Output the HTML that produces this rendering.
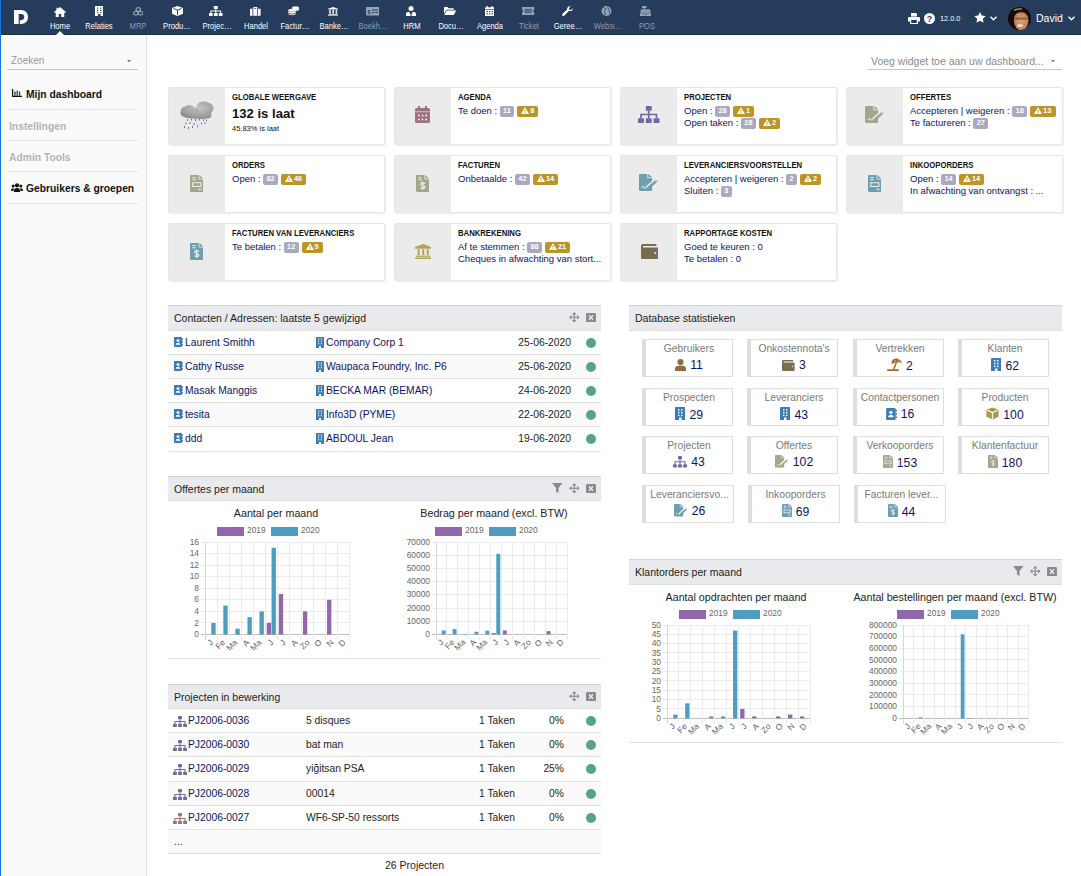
<!DOCTYPE html>
<html><head><meta charset="utf-8"><title>Dolibarr</title>
<style>
*{box-sizing:border-box;}
html,body{margin:0;padding:0;}
body{width:1081px;height:876px;overflow:hidden;position:relative;background:#fff;font-family:"Liberation Sans", sans-serif;color:#222;}
.a{position:absolute;white-space:nowrap;}
.nav{position:absolute;left:0;top:0;width:1081px;height:35px;background:#263c5c;border-bottom:1px solid #1d3048;}
.navt{position:absolute;top:21.2px;font-size:8.8px;color:#fff;text-align:center;width:60px;line-height:10px;transform:scaleX(0.86);transform-origin:50% 0;}
.navt.dis{color:#8f9db0;}
.side{position:absolute;left:2px;top:36px;width:144px;height:840px;background:#fafafa;}
.sideb{position:absolute;left:146px;top:35px;width:1px;height:841px;background:#dcdcdc;}
.box{position:absolute;width:217px;height:58px;background:#fff;border:1px solid #e6e6e6;border-radius:2px;box-shadow:1px 1px 2px rgba(0,0,0,.07);}
.boxi{position:absolute;left:0;top:0;width:56px;height:56px;background:#ebebeb;border-radius:1.5px 0 0 1.5px;}
.bt{position:absolute;left:63px;top:3.7px;font-size:8.4px;font-weight:bold;color:#111;text-transform:uppercase;white-space:nowrap;transform:scaleX(0.92);transform-origin:0 0;}
.bl{position:absolute;left:63px;font-size:9.5px;color:#0a1464;white-space:nowrap;line-height:12px;}
.bg{display:inline-block;vertical-align:1px;height:10.5px;line-height:10.5px;padding:0 3.3px;border-radius:2px;font-size:7.4px;font-weight:bold;color:#fff;background:#aaa9bf;text-align:center;margin-left:0px;}
.bw{display:inline-block;vertical-align:1px;height:10.5px;line-height:10.5px;padding:0 4.2px 0 4px;border-radius:2px;font-size:7.4px;font-weight:bold;color:#fff;background:#bc9526;text-align:center;margin-left:3px;}
.wh{position:absolute;height:26px;background:#e9eaed;border-top:1px solid #d2d2d2;border-bottom:1px solid #dedede;font-size:10.5px;color:#222;}
.wh span.t{position:absolute;left:6px;top:6px;}
.row{position:absolute;height:24px;border-bottom:1px solid #e0e0e0;font-size:10.3px;color:#0a1464;}
.row span{position:absolute;top:6px;white-space:nowrap;}
.dot{position:absolute;width:10px;height:10px;border-radius:50%;background:#55a580;}
.sb{position:absolute;width:91px;height:38px;background:#fff;border:1px solid #dedede;border-left:4px solid #dedede;}
.sbt{position:absolute;left:0;right:0;top:2.9px;text-align:center;font-size:10.3px;color:#7a7a7a;white-space:nowrap;}
.sbv{position:absolute;left:0;right:0;top:18.2px;text-align:center;font-size:12.2px;color:#0a1464;white-space:nowrap;}
</style></head><body>

<div class="a" style="left:0;top:0;width:1px;height:876px;background:#1476dc;z-index:5"></div>
<div class="nav"></div>
<svg class="a" style="left:14px;top:10px" width="14" height="14" viewBox="0 0 15 15"><path d="M0 0 H7.5 C12.5 0 15 3.2 15 7.5 C15 11.8 12.5 15 7.5 15 H6.2 V11 H7.5 C9.8 11 11 9.5 11 7.5 C11 5.5 9.8 4.2 7.5 4.2 H5 V15 H0 Z" fill="#fff"/></svg>
<div class="navt" style="left:30.1px">Home</div>
<svg class="a" style="left:54px;top:6.5px" width="12" height="10" viewBox="0 0 24 20" preserveAspectRatio="none"><path d="M12 0 L24 10 L22.3 12 L20.5 10.5 V20 H14.5 V14 H9.5 V20 H3.5 V10.5 L1.7 12 L0 10 L5 5.8 V1.5 H8 V3.3 Z" fill="#fff"/></svg>
<div class="navt" style="left:69.2px">Relaties</div>
<svg class="a" style="left:94.5px;top:6px" width="8.5" height="10" viewBox="0 0 17 20" preserveAspectRatio="none"><path d="M0 0 H17 V20 H11 V16 H6 V20 H0 Z" fill="#fff"/><g fill="#263c5c"><rect x="4" y="3" width="2.5" height="2.5"/><rect x="10.5" y="3" width="2.5" height="2.5"/><rect x="4" y="7.5" width="2.5" height="2.5"/><rect x="10.5" y="7.5" width="2.5" height="2.5"/><rect x="4" y="12" width="2.5" height="2.5"/><rect x="10.5" y="12" width="2.5" height="2.5"/></g></svg>
<div class="navt dis" style="left:108.3px">MRP</div>
<svg class="a" style="left:132.5px;top:7px" width="10.6" height="8.6" viewBox="0 0 22 18" preserveAspectRatio="none"><g fill="none" stroke="#97a3b4" stroke-width="2.2"><path d="M11 1.2 L15.5 3 V7.5 L11 9.3 L6.5 7.5 V3 Z"/><path d="M6 9 L10.5 10.8 V15.3 L6 17 L1.5 15.3 V10.8 Z"/><path d="M16 9 L20.5 10.8 V15.3 L16 17 L11.5 15.3 V10.8 Z"/></g></svg>
<div class="navt" style="left:147.4px">Produ…</div>
<svg class="a" style="left:171.6px;top:6px" width="11" height="10" viewBox="0 0 22 20" preserveAspectRatio="none"><path d="M11 0 L22 4 V15.5 L11 20 L0 15.5 V4 Z" fill="#fff"/><path d="M3 5 L11 8.2 L19 5 M11 8.2 V17.5" stroke="#263c5c" stroke-width="2" fill="none"/><path d="M11 8.2 L19 5 V14.5 L11 17.5 Z" fill="#263c5c" opacity=".0"/></svg>
<div class="navt" style="left:186.5px">Projec…</div>
<svg class="a" style="left:209.2px;top:6px" width="13.6" height="10" viewBox="0 0 27 20" preserveAspectRatio="none"><g fill="#fff"><rect x="9.5" y="0" width="8" height="6" rx="1"/><rect x="0" y="14" width="7.5" height="6" rx="1"/><rect x="9.75" y="14" width="7.5" height="6" rx="1"/><rect x="19.5" y="14" width="7.5" height="6" rx="1"/></g><path d="M13.5 6 V14 M3.75 14 V10 H23.25 V14" stroke="#fff" stroke-width="2" fill="none"/></svg>
<div class="navt" style="left:225.6px">Handel</div>
<svg class="a" style="left:250px;top:7px" width="10.6" height="8.7" viewBox="0 0 21 17" preserveAspectRatio="none"><path d="M6.5 0 H14.5 V3.5 H21 V17 H0 V3.5 H6.5 Z M8.5 2 V3.5 H12.5 V2 Z" fill="#fff" fill-rule="evenodd"/><rect x="5" y="3.5" width="1.6" height="13.5" fill="#263c5c"/><rect x="14.4" y="3.5" width="1.6" height="13.5" fill="#263c5c"/></svg>
<div class="navt" style="left:264.7px">Factur…</div>
<svg class="a" style="left:288.4px;top:6px" width="11.6" height="9.6" viewBox="0 0 23 19" preserveAspectRatio="none"><g fill="#fff"><ellipse cx="15" cy="3.5" rx="7" ry="3.2"/><path d="M8 5 Q15 9 22 5 V8 Q15 12 8 8 Z"/><ellipse cx="8" cy="8.5" rx="7.5" ry="3"/><path d="M0.5 10.5 Q8 14.5 15.5 10.5 V13.5 Q8 17.5 0.5 13.5 Z"/><path d="M0.5 15 Q8 19 15.5 15 V16.5 Q8 20.5 0.5 16.5 Z"/></g></svg>
<div class="navt" style="left:303.8px">Banke…</div>
<svg class="a" style="left:328px;top:7px" width="10.4" height="8.6" viewBox="0 0 21 17" preserveAspectRatio="none"><path d="M10.5 0 L21 3.5 V5 H0 V3.5 Z" fill="#fff"/><g fill="#fff"><rect x="2.5" y="6" width="3" height="7"/><rect x="9" y="6" width="3" height="7"/><rect x="15.5" y="6" width="3" height="7"/><rect x="1" y="13.5" width="19" height="1.6"/><rect x="0" y="15.4" width="21" height="1.6"/></g></svg>
<div class="navt dis" style="left:342.9px">Boekh…</div>
<svg class="a" style="left:365.5px;top:7px" width="13.5" height="8.6" viewBox="0 0 27 17" preserveAspectRatio="none"><rect x="0" y="0" width="27" height="17" rx="1.5" fill="#97a3b4"/><text x="6" y="13" font-size="11" font-weight="bold" text-anchor="middle" fill="#263c5c" font-family="Liberation Sans">$</text><rect x="12" y="5" width="12" height="2" fill="#263c5c"/><rect x="12" y="10" width="5" height="2" fill="#263c5c"/><rect x="19" y="10" width="5" height="2" fill="#263c5c"/></svg>
<div class="navt" style="left:382.0px">HRM</div>
<svg class="a" style="left:406.2px;top:6px" width="10" height="10" viewBox="0 0 20 20" preserveAspectRatio="none"><circle cx="10" cy="5" r="5" fill="#fff"/><path d="M0 20 V16.5 Q0 11.5 5.5 11.5 L10 16.5 L14.5 11.5 Q20 11.5 20 16.5 V20 Z" fill="#fff"/><path d="M9 12.5 H11 L11.5 19 L10 20 L8.5 19 Z" fill="#263c5c"/></svg>
<div class="navt" style="left:421.1px">Docu…</div>
<svg class="a" style="left:444px;top:7px" width="12.3" height="8" viewBox="0 0 25 16" preserveAspectRatio="none"><path d="M0 1.5 Q0 0 1.5 0 H7 L9.5 2.5 H18.5 Q20 2.5 20 4 V5.5 H5 L0 13.5 Z" fill="#fff"/><path d="M5.5 7 H25 L20 16 H0.5 Z" fill="#fff"/></svg>
<div class="navt" style="left:460.2px">Agenda</div>
<svg class="a" style="left:484.8px;top:6px" width="9.5" height="10" viewBox="0 0 19 20" preserveAspectRatio="none"><path d="M0 4 Q0 2.5 1.5 2.5 H17.5 Q19 2.5 19 4 V18.5 Q19 20 17.5 20 H1.5 Q0 20 0 18.5 Z" fill="#fff"/><rect x="3.5" y="0" width="2.5" height="4" fill="#fff"/><rect x="13" y="0" width="2.5" height="4" fill="#fff"/><rect x="0" y="6" width="19" height="1.3" fill="#263c5c"/><g fill="#263c5c"><rect x="3" y="10" width="2.6" height="2.4"/><rect x="8.2" y="10" width="2.6" height="2.4"/><rect x="13.4" y="10" width="2.6" height="2.4"/><rect x="3" y="14.5" width="2.6" height="2.4"/><rect x="8.2" y="14.5" width="2.6" height="2.4"/><rect x="13.4" y="14.5" width="2.6" height="2.4"/></g></svg>
<div class="navt dis" style="left:499.3px">Ticket</div>
<svg class="a" style="left:522.4px;top:7px" width="12.3" height="8" viewBox="0 0 25 16" preserveAspectRatio="none"><path d="M0 0 H25 V5 Q23 5 23 8 Q23 11 25 11 V16 H0 V11 Q2 11 2 8 Q2 5 0 5 Z" fill="#97a3b4"/><rect x="5" y="3.5" width="15" height="9" fill="#263c5c" opacity=".55"/></svg>
<div class="navt" style="left:538.4px">Geree…</div>
<svg class="a" style="left:561.8px;top:6px" width="11" height="10" viewBox="0 0 22 20" preserveAspectRatio="none"><path d="M21.5 4.5 L18 8 L14.5 7.5 L14 4 L17.5 0.5 C13.5 -0.5 9.5 2.5 10.2 7 L1.2 15.5 C0 16.8 0 18.5 1.2 19.3 C2.3 20.3 3.8 20 4.8 18.8 L13.5 10 C18 11 22.5 8.5 21.5 4.5 Z" fill="#fff"/></svg>
<div class="navt dis" style="left:577.5px">Websi…</div>
<svg class="a" style="left:601.1px;top:6px" width="11" height="10" viewBox="0 0 22 20" preserveAspectRatio="none"><circle cx="11" cy="10" r="10" fill="#97a3b4"/><path d="M5 3.5 Q8 3 9 5.5 Q10 8 7.5 9 Q5.5 10.5 7.5 13 Q9 15 8 18.5 M14 1.2 Q12.5 4 14.5 5.5 Q17 6.5 16.5 9 Q15.5 11.5 17.5 14 Q18.5 15 18 16.5" stroke="#263c5c" stroke-width="1.8" fill="none"/></svg>
<div class="navt dis" style="left:616.6px">POS</div>
<svg class="a" style="left:640.2px;top:6px" width="11" height="10" viewBox="0 0 22 20" preserveAspectRatio="none"><rect x="4" y="0" width="9" height="4" fill="#97a3b4"/><rect x="7.5" y="4" width="2" height="2.5" fill="#97a3b4"/><path d="M2 6.5 H20 L21.5 13.5 H0.5 Z" fill="#97a3b4"/><rect x="0" y="14.5" width="22" height="5.5" fill="#97a3b4"/><g fill="#263c5c" opacity=".6"><rect x="5" y="8.5" width="2" height="1.5"/><rect x="10" y="8.5" width="2" height="1.5"/><rect x="15" y="8.5" width="2" height="1.5"/><rect x="7" y="16.5" width="8" height="1.5"/></g></svg>
<svg class="a" style="left:55px;top:30px" width="10" height="6" viewBox="0 0 10 6"><path d="M0 6 L5 1 L10 6 Z" fill="#fff"/></svg>
<svg class="a" style="left:908px;top:13px" width="12" height="11" viewBox="0 0 12 11"><path d="M3 0 H8 L9 1 V3.5 H3 Z M1 4 H11 Q12 4 12 5 V8.5 H10 V11 H2 V8.5 H0 V5 Q0 4 1 4 Z" fill="#fff"/><rect x="3.2" y="7" width="5.6" height="3" fill="#263c5c"/></svg>
<svg class="a" style="left:924px;top:13px" width="11" height="11" viewBox="0 0 11 11"><circle cx="5.5" cy="5.5" r="5.5" fill="#fff"/><text x="5.5" y="9" font-size="9" font-weight="bold" text-anchor="middle" fill="#263c5c" font-family="Liberation Sans">?</text></svg>
<div class="a" style="left:940px;top:13.5px;font-size:7.3px;color:#fff;line-height:10px">12.0.0</div>
<svg class="a" style="left:974px;top:12px" width="12" height="11" viewBox="0 0 24 23"><path d="M12 0 L15.5 7.5 L24 8.5 L17.8 14.2 L19.4 22.5 L12 18.4 L4.6 22.5 L6.2 14.2 L0 8.5 L8.5 7.5 Z" fill="#fff"/></svg>
<svg class="a" style="left:990px;top:16px" width="7" height="5" viewBox="0 0 7 5"><path d="M0.5 0.8 L3.5 3.8 L6.5 0.8" stroke="#fff" stroke-width="1.4" fill="none"/></svg>
<svg class="a" style="left:1008px;top:7px" width="23" height="23" viewBox="0 0 23 23"><defs><clipPath id="av"><circle cx="11.5" cy="11.5" r="11.5"/></clipPath><radialGradient id="fg" cx=".5" cy=".5" r=".6"><stop offset="0" stop-color="#e0a27c"/><stop offset="1" stop-color="#b87452"/></radialGradient></defs><g clip-path="url(#av)"><rect width="23" height="23" fill="#140c08"/><ellipse cx="13.2" cy="13.5" rx="7.3" ry="9.8" fill="url(#fg)"/><path d="M3 7 Q8 1 16 2.5 Q21 4 21 10 L19.5 9 Q18 5 13 5.2 Q8 5.5 6.5 9 Z" fill="#1a100a"/><path d="M6 3.5 Q10 1.2 14 2" stroke="#b8a850" stroke-width="1.2" fill="none"/><rect x="6.5" y="10.5" width="14" height="2.2" fill="#6a4a3a" opacity=".65"/><ellipse cx="12" cy="18.5" rx="3" ry="1.6" fill="#e8dcc0"/></g></svg>
<div class="a" style="left:1036px;top:12px;font-size:10.5px;color:#fff;line-height:12px">David</div>
<svg class="a" style="left:1068px;top:16px" width="7" height="5" viewBox="0 0 7 5"><path d="M0.5 0.8 L3.5 3.8 L6.5 0.8" stroke="#fff" stroke-width="1.4" fill="none"/></svg>
<div class="side"></div><div class="sideb"></div>
<div class="a" style="left:11px;top:55px;font-size:10px;color:#999;line-height:12px">Zoeken</div>
<svg class="a" style="left:127px;top:59.5px" width="4" height="2.5" viewBox="0 0 5 3"><path d="M0 0 H5 L2.5 3 Z" fill="#777"/></svg>
<div class="a" style="left:7px;top:69px;width:131px;height:1px;background:#c8c8c8"></div>
<svg class="a" style="left:12px;top:89px" width="10" height="8" viewBox="0 0 10 8"><path d="M0.6 0 V7.4 H10" stroke="#111" stroke-width="1.2" fill="none"/><rect x="2.3" y="2.5" width="1.3" height="4.3" fill="#263c5c"/><rect x="4.6" y="1.5" width="1.3" height="5.3" fill="#263c5c"/><rect x="6.9" y="2.5" width="1.3" height="4.3" fill="#263c5c"/></svg>
<div class="a" style="left:26px;top:88.8px;font-size:10.3px;font-weight:bold;color:#111;line-height:12px">Mijn dashboard</div>
<div class="a" style="left:7px;top:109px;width:131px;height:1px;background:#e3e3e3"></div>
<div class="a" style="left:9px;top:120.8px;font-size:10.3px;font-weight:bold;color:#b3b3b3;line-height:12px">Instellingen</div>
<div class="a" style="left:7px;top:140px;width:131px;height:1px;background:#e3e3e3"></div>
<div class="a" style="left:9px;top:151.7px;font-size:10.3px;font-weight:bold;color:#b3b3b3;line-height:12px">Admin Tools</div>
<div class="a" style="left:7px;top:171px;width:131px;height:1px;background:#e3e3e3"></div>
<svg class="a" style="left:11px;top:183px" width="12" height="9" viewBox="0 0 12 9"><circle cx="6" cy="2.3" r="2.1" fill="#111"/><circle cx="2.2" cy="3" r="1.5" fill="#111"/><circle cx="9.8" cy="3" r="1.5" fill="#111"/><path d="M2.8 9 Q2.8 5 6 5 Q9.2 5 9.2 9 Z" fill="#111"/><path d="M0 8 Q0 5.2 2.2 5.2 Q3 5.2 3.4 5.6 Q2.3 6.5 2.3 8 Z M12 8 Q12 5.2 9.8 5.2 Q9 5.2 8.6 5.6 Q9.7 6.5 9.7 8 Z" fill="#111"/></svg>
<div class="a" style="left:26px;top:182.5px;font-size:10.3px;font-weight:bold;color:#111;line-height:12px">Gebruikers &amp; groepen</div>
<div class="a" style="left:7px;top:203px;width:131px;height:1px;background:#e3e3e3"></div>
<div class="a" style="left:871px;top:55px;font-size:10.5px;color:#8a8a8a;line-height:12px">Voeg widget toe aan uw dashboard...</div>
<svg class="a" style="left:1051px;top:59.5px" width="4" height="2.5" viewBox="0 0 5 3"><path d="M0 0 H5 L2.5 3 Z" fill="#777"/></svg>
<div class="a" style="left:867px;top:69px;width:195px;height:1px;background:#c8c8c8"></div>
<div class="box" style="left:168px;top:87px"><div class="boxi"></div>
<div class="bt">GLOBALE WEERGAVE</div>
<div class="a" style="left:63px;top:17.8px;font-size:13.1px;font-weight:bold;color:#111;line-height:15px">132 is laat</div>
<div class="a" style="left:63px;top:35.8px;font-size:7.5px;color:#111;line-height:9px">45,83% is laat</div>
<svg class="a" style="left:11px;top:13px" width="34" height="32" viewBox="0 0 34 32"><defs><radialGradient id="cg" cx=".55" cy=".35" r=".7"><stop offset="0" stop-color="#c4c4c4"/><stop offset=".6" stop-color="#a5a5a5"/><stop offset="1" stop-color="#888"/></radialGradient></defs>
<path d="M2 15 Q-0.5 13 0.8 9.5 Q1.5 6 5 5.5 Q8 3 11.5 4.5 Q14 5.5 16 7 Q17 2 21 1 Q25 0 28 1.5 Q32 2.5 33 5.5 Q34.5 8 32.5 10 Q31.5 11.5 31 12.5 Q32.5 15 30 17 Q22 18.5 12 17.5 Q5 17 2 15 Z" fill="url(#cg)"/>
<path d="M16 7 Q17.5 9 17 12" stroke="#8a8a8a" stroke-width=".8" fill="none" opacity=".6"/>
<g fill="#5a7fae"><rect x="7" y="18" width="1" height="2"/><rect x="11" y="17.5" width="1" height="2"/><rect x="15" y="18" width="1" height="2"/><rect x="19" y="17.5" width="1" height="2"/><rect x="23" y="18" width="1" height="2"/><rect x="26" y="18.5" width="1" height="2"/>
<rect x="5.5" y="21.5" width="1" height="2"/><rect x="9.5" y="21" width="1" height="2"/><rect x="13.5" y="22" width="1" height="2"/><rect x="21" y="21.5" width="1" height="2"/><rect x="24.5" y="21" width="1" height="2"/>
<rect x="4" y="25" width="1" height="2"/><rect x="8" y="26" width="1" height="2"/><rect x="12" y="25" width="1" height="2"/><rect x="17" y="24.5" width="1" height="2"/></g>
<path d="M18 17.5 L16 23 L19 23 L17 31" stroke="#dcdcf2" stroke-width="1.2" fill="none"/></svg>
</div>
<div class="box" style="left:394px;top:87px"><div class="boxi"></div>
<div class="bt">AGENDA</div>
<div class="bl" style="top:17px">Te doen : <span class="bg">11</span><span class="bw"><svg width="8" height="7" viewBox="0 0 8 7" style="vertical-align:-0.5px;margin-right:1px"><path d="M4 0 L8 7 H0 Z" fill="#fff"/><rect x="3.5" y="2.3" width="1" height="2.4" fill="#bc9526"/><rect x="3.5" y="5.2" width="1" height="1" fill="#bc9526"/></svg>8</span></div>
<svg class="a" style="left:20px;top:18px" width="15" height="17" viewBox="0 0 15 17"><path d="M0 3.5 Q0 2 1.5 2 H13.5 Q15 2 15 3.5 V15.5 Q15 17 13.5 17 H1.5 Q0 17 0 15.5 Z" fill="#9d7281"/><rect x="3" y="0" width="2" height="3" fill="#9d7281"/><rect x="10" y="0" width="2" height="3" fill="#9d7281"/><rect x="0" y="5" width="15" height="1.3" fill="#c7a9b3"/><g fill="#fff"><rect x="3" y="8.7" width="1.6" height="1.6"/><rect x="6.7" y="8.7" width="1.6" height="1.6"/><rect x="10.4" y="8.7" width="1.6" height="1.6"/><rect x="3" y="12.7" width="1.6" height="1.6"/><rect x="6.7" y="12.7" width="1.6" height="1.6"/><rect x="10.4" y="12.7" width="1.6" height="1.6"/></g></svg>
</div>
<div class="box" style="left:620px;top:87px"><div class="boxi"></div>
<div class="bt">PROJECTEN</div>
<div class="bl" style="top:17px">Open : <span class="bg">28</span><span class="bw"><svg width="8" height="7" viewBox="0 0 8 7" style="vertical-align:-0.5px;margin-right:1px"><path d="M4 0 L8 7 H0 Z" fill="#fff"/><rect x="3.5" y="2.3" width="1" height="2.4" fill="#bc9526"/><rect x="3.5" y="5.2" width="1" height="1" fill="#bc9526"/></svg>1</span></div>
<div class="bl" style="top:29px">Open taken : <span class="bg">28</span><span class="bw"><svg width="8" height="7" viewBox="0 0 8 7" style="vertical-align:-0.5px;margin-right:1px"><path d="M4 0 L8 7 H0 Z" fill="#fff"/><rect x="3.5" y="2.3" width="1" height="2.4" fill="#bc9526"/><rect x="3.5" y="5.2" width="1" height="1" fill="#bc9526"/></svg>2</span></div>
<svg class="a" style="left:17px;top:18px" width="21.5" height="17" viewBox="0 0 18 14" preserveAspectRatio="none"><rect x="6.5" y="0" width="5" height="4" rx=".6" fill="#6c6aa0"/><rect x="0" y="10" width="5" height="4" rx=".6" fill="#6c6aa0"/><rect x="6.5" y="10" width="5" height="4" rx=".6" fill="#6c6aa0"/><rect x="13" y="10" width="5" height="4" rx=".6" fill="#6c6aa0"/><path d="M9 4 V10 M2.5 10 V7 H15.5 V10" stroke="#6c6aa0" stroke-width="1.4" fill="none"/></svg>
</div>
<div class="box" style="left:846px;top:87px"><div class="boxi"></div>
<div class="bt">OFFERTES</div>
<div class="bl" style="top:17px">Accepteren | weigeren : <span class="bg">18</span><span class="bw"><svg width="8" height="7" viewBox="0 0 8 7" style="vertical-align:-0.5px;margin-right:1px"><path d="M4 0 L8 7 H0 Z" fill="#fff"/><rect x="3.5" y="2.3" width="1" height="2.4" fill="#bc9526"/><rect x="3.5" y="5.2" width="1" height="1" fill="#bc9526"/></svg>13</span></div>
<div class="bl" style="top:29px">Te factureren : <span class="bg">27</span></div>
<svg class="a" style="left:18px;top:18px" width="20" height="17" viewBox="0 0 16 16" preserveAspectRatio="none"><path d="M1 0 H7.5 L10.5 3 V6.5 L6 11 L5.5 13.5 L8 13 L10.5 10.5 V15 Q10.5 16 9.5 16 H1 Q0 16 0 15 V1 Q0 0 1 0 Z" fill="#a3a68c"/><path d="M7 0 V3.5 H10.5" stroke="#ebebeb" stroke-width=".8" fill="none"/><path d="M2 13 Q3.5 11 4 12.5 Q4.5 13.5 6 12.8" stroke="#ebebeb" stroke-width=".9" fill="none"/><path d="M6.5 12.5 L13.5 5.5 L15 7 L8 14 L6 14.5 Z" fill="#a3a68c"/><path d="M12.8 6.2 L14.3 7.7" stroke="#ebebeb" stroke-width=".8"/></svg>
</div>
<div class="box" style="left:168px;top:155px"><div class="boxi"></div>
<div class="bt">ORDERS</div>
<div class="bl" style="top:17px">Open : <span class="bg">82</span><span class="bw"><svg width="8" height="7" viewBox="0 0 8 7" style="vertical-align:-0.5px;margin-right:1px"><path d="M4 0 L8 7 H0 Z" fill="#fff"/><rect x="3.5" y="2.3" width="1" height="2.4" fill="#bc9526"/><rect x="3.5" y="5.2" width="1" height="1" fill="#bc9526"/></svg>46</span></div>
<svg class="a" style="left:21px;top:19px" width="13.4" height="17" viewBox="0 0 11.5 16" preserveAspectRatio="none"><path d="M1 0 H8 L11.5 3.5 V15 Q11.5 16 10.5 16 H1 Q0 16 0 15 V1 Q0 0 1 0 Z" fill="#a3a68c"/><path d="M7.7 0 V3.8 H11.5" stroke="#ebebeb" stroke-width=".8" fill="none"/><rect x="2" y="2" width="3" height="1" fill="#ebebeb"/><rect x="2" y="4" width="3" height="1" fill="#ebebeb"/><rect x="2.3" y="7.3" width="7" height="3.5" fill="none" stroke="#ebebeb" stroke-width="1"/><rect x="7" y="13" width="3" height="1" fill="#ebebeb"/></svg>
</div>
<div class="box" style="left:394px;top:155px"><div class="boxi"></div>
<div class="bt">FACTUREN</div>
<div class="bl" style="top:17px">Onbetaalde : <span class="bg">42</span><span class="bw"><svg width="8" height="7" viewBox="0 0 8 7" style="vertical-align:-0.5px;margin-right:1px"><path d="M4 0 L8 7 H0 Z" fill="#fff"/><rect x="3.5" y="2.3" width="1" height="2.4" fill="#bc9526"/><rect x="3.5" y="5.2" width="1" height="1" fill="#bc9526"/></svg>14</span></div>
<svg class="a" style="left:21px;top:19px" width="13.4" height="17" viewBox="0 0 11.5 16" preserveAspectRatio="none"><path d="M1 0 H8 L11.5 3.5 V15 Q11.5 16 10.5 16 H1 Q0 16 0 15 V1 Q0 0 1 0 Z" fill="#a3a68c"/><path d="M7.7 0 V3.8 H11.5" stroke="#ebebeb" stroke-width=".8" fill="none"/><rect x="2" y="2" width="3" height="1" fill="#ebebeb"/><rect x="2" y="4" width="3" height="1" fill="#ebebeb"/><path d="M7.6 8.2 Q7.2 7.2 5.8 7.2 Q4 7.2 4 8.5 Q4 9.6 5.8 9.9 Q7.6 10.2 7.6 11.5 Q7.6 12.8 5.8 12.8 Q4.3 12.8 3.9 11.8 M5.8 6.2 V13.8" stroke="#ebebeb" stroke-width="1.1" fill="none"/></svg>
</div>
<div class="box" style="left:620px;top:155px"><div class="boxi"></div>
<div class="bt">LEVERANCIERSVOORSTELLEN</div>
<div class="bl" style="top:17px">Accepteren | weigeren : <span class="bg">2</span><span class="bw"><svg width="8" height="7" viewBox="0 0 8 7" style="vertical-align:-0.5px;margin-right:1px"><path d="M4 0 L8 7 H0 Z" fill="#fff"/><rect x="3.5" y="2.3" width="1" height="2.4" fill="#bc9526"/><rect x="3.5" y="5.2" width="1" height="1" fill="#bc9526"/></svg>2</span></div>
<div class="bl" style="top:29px">Sluiten : <span class="bg">3</span></div>
<svg class="a" style="left:18px;top:18px" width="20" height="17" viewBox="0 0 16 16" preserveAspectRatio="none"><path d="M1 0 H7.5 L10.5 3 V6.5 L6 11 L5.5 13.5 L8 13 L10.5 10.5 V15 Q10.5 16 9.5 16 H1 Q0 16 0 15 V1 Q0 0 1 0 Z" fill="#6d9fb0"/><path d="M7 0 V3.5 H10.5" stroke="#ebebeb" stroke-width=".8" fill="none"/><path d="M2 13 Q3.5 11 4 12.5 Q4.5 13.5 6 12.8" stroke="#ebebeb" stroke-width=".9" fill="none"/><path d="M6.5 12.5 L13.5 5.5 L15 7 L8 14 L6 14.5 Z" fill="#6d9fb0"/><path d="M12.8 6.2 L14.3 7.7" stroke="#ebebeb" stroke-width=".8"/></svg>
</div>
<div class="box" style="left:846px;top:155px"><div class="boxi"></div>
<div class="bt">INKOOPORDERS</div>
<div class="bl" style="top:17px">Open : <span class="bg">14</span><span class="bw"><svg width="8" height="7" viewBox="0 0 8 7" style="vertical-align:-0.5px;margin-right:1px"><path d="M4 0 L8 7 H0 Z" fill="#fff"/><rect x="3.5" y="2.3" width="1" height="2.4" fill="#bc9526"/><rect x="3.5" y="5.2" width="1" height="1" fill="#bc9526"/></svg>14</span></div>
<div class="bl" style="top:29px">In afwachting van ontvangst : ...</div>
<svg class="a" style="left:21px;top:19px" width="13.4" height="17" viewBox="0 0 11.5 16" preserveAspectRatio="none"><path d="M1 0 H8 L11.5 3.5 V15 Q11.5 16 10.5 16 H1 Q0 16 0 15 V1 Q0 0 1 0 Z" fill="#6d9fb0"/><path d="M7.7 0 V3.8 H11.5" stroke="#ebebeb" stroke-width=".8" fill="none"/><rect x="2" y="2" width="3" height="1" fill="#ebebeb"/><rect x="2" y="4" width="3" height="1" fill="#ebebeb"/><rect x="2.3" y="7.3" width="7" height="3.5" fill="none" stroke="#ebebeb" stroke-width="1"/><rect x="7" y="13" width="3" height="1" fill="#ebebeb"/></svg>
</div>
<div class="box" style="left:168px;top:223px"><div class="boxi"></div>
<div class="bt">FACTUREN VAN LEVERANCIERS</div>
<div class="bl" style="top:17px">Te betalen : <span class="bg">12</span><span class="bw"><svg width="8" height="7" viewBox="0 0 8 7" style="vertical-align:-0.5px;margin-right:1px"><path d="M4 0 L8 7 H0 Z" fill="#fff"/><rect x="3.5" y="2.3" width="1" height="2.4" fill="#bc9526"/><rect x="3.5" y="5.2" width="1" height="1" fill="#bc9526"/></svg>9</span></div>
<svg class="a" style="left:21px;top:19px" width="13.4" height="17" viewBox="0 0 11.5 16" preserveAspectRatio="none"><path d="M1 0 H8 L11.5 3.5 V15 Q11.5 16 10.5 16 H1 Q0 16 0 15 V1 Q0 0 1 0 Z" fill="#6d9fb0"/><path d="M7.7 0 V3.8 H11.5" stroke="#ebebeb" stroke-width=".8" fill="none"/><rect x="2" y="2" width="3" height="1" fill="#ebebeb"/><rect x="2" y="4" width="3" height="1" fill="#ebebeb"/><path d="M7.6 8.2 Q7.2 7.2 5.8 7.2 Q4 7.2 4 8.5 Q4 9.6 5.8 9.9 Q7.6 10.2 7.6 11.5 Q7.6 12.8 5.8 12.8 Q4.3 12.8 3.9 11.8 M5.8 6.2 V13.8" stroke="#ebebeb" stroke-width="1.1" fill="none"/></svg>
</div>
<div class="box" style="left:394px;top:223px"><div class="boxi"></div>
<div class="bt">BANKREKENING</div>
<div class="bl" style="top:17px">Af te stemmen : <span class="bg">88</span><span class="bw"><svg width="8" height="7" viewBox="0 0 8 7" style="vertical-align:-0.5px;margin-right:1px"><path d="M4 0 L8 7 H0 Z" fill="#fff"/><rect x="3.5" y="2.3" width="1" height="2.4" fill="#bc9526"/><rect x="3.5" y="5.2" width="1" height="1" fill="#bc9526"/></svg>21</span></div>
<div class="bl" style="top:29px">Cheques in afwachting van stort...</div>
<svg class="a" style="left:19.7px;top:20px" width="16.4" height="15" viewBox="0 0 16 15.5" preserveAspectRatio="none"><path d="M8 0 L16 3.2 Q16.5 4.5 15.5 5 H0.5 Q-0.5 4.5 0 3.2 Z" fill="#aea55c"/><rect x="2.5" y="5.5" width="2" height="6" fill="#aea55c"/><rect x="7" y="5.5" width="2" height="6" fill="#aea55c"/><rect x="11.5" y="5.5" width="2" height="6" fill="#aea55c"/><rect x="1" y="12" width="14" height="1.3" fill="#aea55c"/><rect x="0" y="14" width="16" height="1.5" rx=".5" fill="#aea55c"/></svg>
</div>
<div class="box" style="left:620px;top:223px"><div class="boxi"></div>
<div class="bt">RAPPORTAGE KOSTEN</div>
<div class="bl" style="top:17px">Goed te keuren : 0</div>
<div class="bl" style="top:29px">Te betalen : 0</div>
<svg class="a" style="left:19.6px;top:20px" width="17.4" height="15" viewBox="0 0 17 15" preserveAspectRatio="none"><path d="M1.5 0 H15 V2 H2 V3.5 H16 Q17 3.5 17 4.5 V14 Q17 15 16 15 H1.5 Q0 15 0 13.5 V1.5 Q0 0 1.5 0 Z" fill="#7b6b50"/><circle cx="14" cy="9" r="1" fill="#ebebeb"/></svg>
</div>
<div class="wh" style="left:168px;top:305px;width:433px;height:26px"><span class="t">Contacten / Adressen: laatste 5 gewijzigd</span>
<svg class="a" style="left:401px;top:6px" width="10.5" height="10.5" viewBox="0 0 12 12"><path d="M6 0 L8.6 2.8 H3.4 Z M6 12 L8.6 9.2 H3.4 Z M0 6 L2.8 3.4 V8.6 Z M12 6 L9.2 3.4 V8.6 Z" fill="#8a8a8a"/><path d="M6 2.5 V9.5 M2.5 6 H9.5" stroke="#8a8a8a" stroke-width="1.3"/></svg>
<svg class="a" style="left:418px;top:7px" width="10" height="9" viewBox="0 0 10 9"><rect width="10" height="9" rx="1" fill="#8a8a8a"/><path d="M3 2.2 L7 6.8 M7 2.2 L3 6.8" stroke="#e9eaed" stroke-width="1.4"/></svg>
</div>
<div class="row" style="left:168px;top:331px;width:433px;height:24px;background:#fff">
<svg class="a" style="left:6px;top:6px" width="9" height="10" viewBox="0 0 9 10"><rect x="0" y="0" width="8" height="10" rx="1" fill="#3c7bb4"/><rect x="8" y="1.5" width="1" height="1.5" fill="#3c7bb4"/><rect x="8" y="4.2" width="1" height="1.5" fill="#3c7bb4"/><rect x="8" y="7" width="1" height="1.5" fill="#3c7bb4"/><circle cx="4" cy="3.6" r="1.4" fill="#fff"/><path d="M1.7 7.8 Q1.7 5.7 4 5.7 Q6.3 5.7 6.3 7.8 Z" fill="#fff"/></svg>
<span style="left:17px">Laurent Smithh</span>
<svg class="a" style="left:148px;top:6px" width="8" height="11" viewBox="0 0 8 11"><path d="M0 0 H8 V11 H5 V9 H3 V11 H0 Z" fill="#3c7bb4"/><g fill="#fff"><rect x="2" y="1.5" width="1.2" height="1.2"/><rect x="4.8" y="1.5" width="1.2" height="1.2"/><rect x="2" y="3.8" width="1.2" height="1.2"/><rect x="4.8" y="3.8" width="1.2" height="1.2"/><rect x="2" y="6.1" width="1.2" height="1.2"/><rect x="4.8" y="6.1" width="1.2" height="1.2"/></g></svg>
<span style="left:158px">Company Corp 1</span>
<span style="right:30px;color:#222">25-06-2020</span>
<div class="dot" style="left:418px;top:7px"></div>
</div>
<div class="row" style="left:168px;top:355px;width:433px;height:24px;background:#fafafa">
<svg class="a" style="left:6px;top:6px" width="9" height="10" viewBox="0 0 9 10"><rect x="0" y="0" width="8" height="10" rx="1" fill="#3c7bb4"/><rect x="8" y="1.5" width="1" height="1.5" fill="#3c7bb4"/><rect x="8" y="4.2" width="1" height="1.5" fill="#3c7bb4"/><rect x="8" y="7" width="1" height="1.5" fill="#3c7bb4"/><circle cx="4" cy="3.6" r="1.4" fill="#fff"/><path d="M1.7 7.8 Q1.7 5.7 4 5.7 Q6.3 5.7 6.3 7.8 Z" fill="#fff"/></svg>
<span style="left:17px">Cathy Russe</span>
<svg class="a" style="left:148px;top:6px" width="8" height="11" viewBox="0 0 8 11"><path d="M0 0 H8 V11 H5 V9 H3 V11 H0 Z" fill="#3c7bb4"/><g fill="#fff"><rect x="2" y="1.5" width="1.2" height="1.2"/><rect x="4.8" y="1.5" width="1.2" height="1.2"/><rect x="2" y="3.8" width="1.2" height="1.2"/><rect x="4.8" y="3.8" width="1.2" height="1.2"/><rect x="2" y="6.1" width="1.2" height="1.2"/><rect x="4.8" y="6.1" width="1.2" height="1.2"/></g></svg>
<span style="left:158px">Waupaca Foundry, Inc. P6</span>
<span style="right:30px;color:#222">25-06-2020</span>
<div class="dot" style="left:418px;top:7px"></div>
</div>
<div class="row" style="left:168px;top:379px;width:433px;height:24px;background:#fff">
<svg class="a" style="left:6px;top:6px" width="9" height="10" viewBox="0 0 9 10"><rect x="0" y="0" width="8" height="10" rx="1" fill="#3c7bb4"/><rect x="8" y="1.5" width="1" height="1.5" fill="#3c7bb4"/><rect x="8" y="4.2" width="1" height="1.5" fill="#3c7bb4"/><rect x="8" y="7" width="1" height="1.5" fill="#3c7bb4"/><circle cx="4" cy="3.6" r="1.4" fill="#fff"/><path d="M1.7 7.8 Q1.7 5.7 4 5.7 Q6.3 5.7 6.3 7.8 Z" fill="#fff"/></svg>
<span style="left:17px">Masak Manggis</span>
<svg class="a" style="left:148px;top:6px" width="8" height="11" viewBox="0 0 8 11"><path d="M0 0 H8 V11 H5 V9 H3 V11 H0 Z" fill="#3c7bb4"/><g fill="#fff"><rect x="2" y="1.5" width="1.2" height="1.2"/><rect x="4.8" y="1.5" width="1.2" height="1.2"/><rect x="2" y="3.8" width="1.2" height="1.2"/><rect x="4.8" y="3.8" width="1.2" height="1.2"/><rect x="2" y="6.1" width="1.2" height="1.2"/><rect x="4.8" y="6.1" width="1.2" height="1.2"/></g></svg>
<span style="left:158px">BECKA MAR (BEMAR)</span>
<span style="right:30px;color:#222">24-06-2020</span>
<div class="dot" style="left:418px;top:7px"></div>
</div>
<div class="row" style="left:168px;top:403px;width:433px;height:24px;background:#fafafa">
<svg class="a" style="left:6px;top:6px" width="9" height="10" viewBox="0 0 9 10"><rect x="0" y="0" width="8" height="10" rx="1" fill="#3c7bb4"/><rect x="8" y="1.5" width="1" height="1.5" fill="#3c7bb4"/><rect x="8" y="4.2" width="1" height="1.5" fill="#3c7bb4"/><rect x="8" y="7" width="1" height="1.5" fill="#3c7bb4"/><circle cx="4" cy="3.6" r="1.4" fill="#fff"/><path d="M1.7 7.8 Q1.7 5.7 4 5.7 Q6.3 5.7 6.3 7.8 Z" fill="#fff"/></svg>
<span style="left:17px">tesita</span>
<svg class="a" style="left:148px;top:6px" width="8" height="11" viewBox="0 0 8 11"><path d="M0 0 H8 V11 H5 V9 H3 V11 H0 Z" fill="#3c7bb4"/><g fill="#fff"><rect x="2" y="1.5" width="1.2" height="1.2"/><rect x="4.8" y="1.5" width="1.2" height="1.2"/><rect x="2" y="3.8" width="1.2" height="1.2"/><rect x="4.8" y="3.8" width="1.2" height="1.2"/><rect x="2" y="6.1" width="1.2" height="1.2"/><rect x="4.8" y="6.1" width="1.2" height="1.2"/></g></svg>
<span style="left:158px">Info3D (PYME)</span>
<span style="right:30px;color:#222">22-06-2020</span>
<div class="dot" style="left:418px;top:7px"></div>
</div>
<div class="row" style="left:168px;top:427px;width:433px;height:25px;background:#fff">
<svg class="a" style="left:6px;top:6px" width="9" height="10" viewBox="0 0 9 10"><rect x="0" y="0" width="8" height="10" rx="1" fill="#3c7bb4"/><rect x="8" y="1.5" width="1" height="1.5" fill="#3c7bb4"/><rect x="8" y="4.2" width="1" height="1.5" fill="#3c7bb4"/><rect x="8" y="7" width="1" height="1.5" fill="#3c7bb4"/><circle cx="4" cy="3.6" r="1.4" fill="#fff"/><path d="M1.7 7.8 Q1.7 5.7 4 5.7 Q6.3 5.7 6.3 7.8 Z" fill="#fff"/></svg>
<span style="left:17px">ddd</span>
<svg class="a" style="left:148px;top:6px" width="8" height="11" viewBox="0 0 8 11"><path d="M0 0 H8 V11 H5 V9 H3 V11 H0 Z" fill="#3c7bb4"/><g fill="#fff"><rect x="2" y="1.5" width="1.2" height="1.2"/><rect x="4.8" y="1.5" width="1.2" height="1.2"/><rect x="2" y="3.8" width="1.2" height="1.2"/><rect x="4.8" y="3.8" width="1.2" height="1.2"/><rect x="2" y="6.1" width="1.2" height="1.2"/><rect x="4.8" y="6.1" width="1.2" height="1.2"/></g></svg>
<span style="left:158px">ABDOUL Jean</span>
<span style="right:30px;color:#222">19-06-2020</span>
<div class="dot" style="left:418px;top:7px"></div>
</div>
<div class="wh" style="left:168px;top:476px;width:433px;height:25px"><span class="t">Offertes per maand</span>
<svg class="a" style="left:401px;top:6px" width="10.5" height="10.5" viewBox="0 0 12 12"><path d="M6 0 L8.6 2.8 H3.4 Z M6 12 L8.6 9.2 H3.4 Z M0 6 L2.8 3.4 V8.6 Z M12 6 L9.2 3.4 V8.6 Z" fill="#8a8a8a"/><path d="M6 2.5 V9.5 M2.5 6 H9.5" stroke="#8a8a8a" stroke-width="1.3"/></svg>
<svg class="a" style="left:418px;top:7px" width="10" height="9" viewBox="0 0 10 9"><rect width="10" height="9" rx="1" fill="#8a8a8a"/><path d="M3 2.2 L7 6.8 M7 2.2 L3 6.8" stroke="#e9eaed" stroke-width="1.4"/></svg>
<svg class="a" style="left:384px;top:6px" width="10.5" height="10.5" viewBox="0 0 11 11"><path d="M0 0 H11 L6.8 5.2 V10.5 L4.2 9 V5.2 Z" fill="#8a8a8a"/></svg>
</div>
<div class="a" style="left:126px;top:506.5px;width:300px;text-align:center;font-size:10.7px;color:#222;line-height:12px">Aantal per maand</div>
<div class="a" style="left:217px;top:527px;width:27px;height:8.5px;background:#9266ab"></div>
<div class="a" style="left:247px;top:525px;font-size:8.4px;color:#666;line-height:11px">2019</div>
<div class="a" style="left:271px;top:527px;width:27px;height:8.5px;background:#4c9dbf"></div>
<div class="a" style="left:301px;top:525px;font-size:8.4px;color:#666;line-height:11px">2020</div>
<svg class="a" style="left:187px;top:536px" width="167" height="120"><line x1="14" y1="98.5" x2="163" y2="98.5" stroke="#bdbdbd" stroke-width="1"/><text x="12" y="101.10" font-size="8.4" fill="#666" text-anchor="end" font-family="Liberation Sans">0</text><line x1="14" y1="86.5" x2="163" y2="86.5" stroke="#ebebeb" stroke-width="1"/><text x="12" y="89.54" font-size="8.4" fill="#666" text-anchor="end" font-family="Liberation Sans">2</text><line x1="14" y1="75.5" x2="163" y2="75.5" stroke="#ebebeb" stroke-width="1"/><text x="12" y="77.97" font-size="8.4" fill="#666" text-anchor="end" font-family="Liberation Sans">4</text><line x1="14" y1="63.5" x2="163" y2="63.5" stroke="#ebebeb" stroke-width="1"/><text x="12" y="66.41" font-size="8.4" fill="#666" text-anchor="end" font-family="Liberation Sans">6</text><line x1="14" y1="52.5" x2="163" y2="52.5" stroke="#ebebeb" stroke-width="1"/><text x="12" y="54.85" font-size="8.4" fill="#666" text-anchor="end" font-family="Liberation Sans">8</text><line x1="14" y1="40.5" x2="163" y2="40.5" stroke="#ebebeb" stroke-width="1"/><text x="12" y="43.29" font-size="8.4" fill="#666" text-anchor="end" font-family="Liberation Sans">10</text><line x1="14" y1="29.5" x2="163" y2="29.5" stroke="#ebebeb" stroke-width="1"/><text x="12" y="31.73" font-size="8.4" fill="#666" text-anchor="end" font-family="Liberation Sans">12</text><line x1="14" y1="17.5" x2="163" y2="17.5" stroke="#ebebeb" stroke-width="1"/><text x="12" y="20.16" font-size="8.4" fill="#666" text-anchor="end" font-family="Liberation Sans">14</text><line x1="14" y1="6.5" x2="163" y2="6.5" stroke="#ebebeb" stroke-width="1"/><text x="12" y="8.60" font-size="8.4" fill="#666" text-anchor="end" font-family="Liberation Sans">16</text><line x1="18.5" y1="6" x2="18.5" y2="104" stroke="#d8d8d8" stroke-width="1"/><line x1="30.5" y1="6" x2="30.5" y2="104" stroke="#ebebeb" stroke-width="1"/><line x1="42.5" y1="6" x2="42.5" y2="104" stroke="#ebebeb" stroke-width="1"/><line x1="54.5" y1="6" x2="54.5" y2="104" stroke="#ebebeb" stroke-width="1"/><line x1="66.5" y1="6" x2="66.5" y2="104" stroke="#ebebeb" stroke-width="1"/><line x1="78.5" y1="6" x2="78.5" y2="104" stroke="#ebebeb" stroke-width="1"/><line x1="90.5" y1="6" x2="90.5" y2="104" stroke="#ebebeb" stroke-width="1"/><line x1="102.5" y1="6" x2="102.5" y2="104" stroke="#ebebeb" stroke-width="1"/><line x1="114.5" y1="6" x2="114.5" y2="104" stroke="#ebebeb" stroke-width="1"/><line x1="126.5" y1="6" x2="126.5" y2="104" stroke="#ebebeb" stroke-width="1"/><line x1="138.5" y1="6" x2="138.5" y2="104" stroke="#ebebeb" stroke-width="1"/><line x1="150.5" y1="6" x2="150.5" y2="104" stroke="#ebebeb" stroke-width="1"/><line x1="162.5" y1="6" x2="162.5" y2="104" stroke="#ebebeb" stroke-width="1"/><rect x="24.27" y="86.94" width="4.34" height="11.56" fill="#4c9dbf"/><rect x="36.33" y="69.59" width="4.34" height="28.91" fill="#4c9dbf"/><rect x="48.39" y="92.72" width="4.34" height="5.78" fill="#4c9dbf"/><rect x="60.45" y="81.16" width="4.34" height="17.34" fill="#4c9dbf"/><rect x="72.50" y="75.38" width="4.34" height="23.12" fill="#4c9dbf"/><rect x="79.74" y="86.94" width="4.34" height="11.56" fill="#9266ab"/><rect x="84.56" y="11.78" width="4.34" height="86.72" fill="#4c9dbf"/><rect x="91.80" y="58.03" width="4.34" height="40.47" fill="#9266ab"/><rect x="115.91" y="75.38" width="4.34" height="23.12" fill="#9266ab"/><rect x="140.03" y="63.81" width="4.34" height="34.69" fill="#9266ab"/><text x="24.63" y="107.80" font-size="8.4" fill="#666" text-anchor="end" font-family="Liberation Sans" transform="rotate(-45 24.63 104.80)">J</text><text x="36.69" y="107.80" font-size="8.4" fill="#666" text-anchor="end" font-family="Liberation Sans" transform="rotate(-45 36.69 104.80)">Fe</text><text x="48.75" y="107.80" font-size="8.4" fill="#666" text-anchor="end" font-family="Liberation Sans" transform="rotate(-45 48.75 104.80)">Ma</text><text x="60.80" y="107.80" font-size="8.4" fill="#666" text-anchor="end" font-family="Liberation Sans" transform="rotate(-45 60.80 104.80)">A</text><text x="72.86" y="107.80" font-size="8.4" fill="#666" text-anchor="end" font-family="Liberation Sans" transform="rotate(-45 72.86 104.80)">Ma</text><text x="84.92" y="107.80" font-size="8.4" fill="#666" text-anchor="end" font-family="Liberation Sans" transform="rotate(-45 84.92 104.80)">J</text><text x="96.98" y="107.80" font-size="8.4" fill="#666" text-anchor="end" font-family="Liberation Sans" transform="rotate(-45 96.98 104.80)">J</text><text x="109.04" y="107.80" font-size="8.4" fill="#666" text-anchor="end" font-family="Liberation Sans" transform="rotate(-45 109.04 104.80)">A</text><text x="121.10" y="107.80" font-size="8.4" fill="#666" text-anchor="end" font-family="Liberation Sans" transform="rotate(-45 121.10 104.80)">Zo</text><text x="133.15" y="107.80" font-size="8.4" fill="#666" text-anchor="end" font-family="Liberation Sans" transform="rotate(-45 133.15 104.80)">O</text><text x="145.21" y="107.80" font-size="8.4" fill="#666" text-anchor="end" font-family="Liberation Sans" transform="rotate(-45 145.21 104.80)">N</text><text x="157.27" y="107.80" font-size="8.4" fill="#666" text-anchor="end" font-family="Liberation Sans" transform="rotate(-45 157.27 104.80)">D</text></svg>
<div class="a" style="left:344px;top:506.5px;width:300px;text-align:center;font-size:10.7px;color:#222;line-height:12px">Bedrag per maand (excl. BTW)</div>
<div class="a" style="left:435px;top:527px;width:27px;height:8.5px;background:#9266ab"></div>
<div class="a" style="left:465px;top:525px;font-size:8.4px;color:#666;line-height:11px">2019</div>
<div class="a" style="left:489px;top:527px;width:27px;height:8.5px;background:#4c9dbf"></div>
<div class="a" style="left:519px;top:525px;font-size:8.4px;color:#666;line-height:11px">2020</div>
<svg class="a" style="left:403.2px;top:536px" width="168" height="120"><line x1="29" y1="98.5" x2="165" y2="98.5" stroke="#bdbdbd" stroke-width="1"/><text x="27.0" y="101.00" font-size="8.4" fill="#666" text-anchor="end" font-family="Liberation Sans">0</text><line x1="29" y1="85.5" x2="165" y2="85.5" stroke="#ebebeb" stroke-width="1"/><text x="27.0" y="87.80" font-size="8.4" fill="#666" text-anchor="end" font-family="Liberation Sans">10000</text><line x1="29" y1="72.5" x2="165" y2="72.5" stroke="#ebebeb" stroke-width="1"/><text x="27.0" y="74.60" font-size="8.4" fill="#666" text-anchor="end" font-family="Liberation Sans">20000</text><line x1="29" y1="58.5" x2="165" y2="58.5" stroke="#ebebeb" stroke-width="1"/><text x="27.0" y="61.40" font-size="8.4" fill="#666" text-anchor="end" font-family="Liberation Sans">30000</text><line x1="29" y1="45.5" x2="165" y2="45.5" stroke="#ebebeb" stroke-width="1"/><text x="27.0" y="48.20" font-size="8.4" fill="#666" text-anchor="end" font-family="Liberation Sans">40000</text><line x1="29" y1="32.5" x2="165" y2="32.5" stroke="#ebebeb" stroke-width="1"/><text x="27.0" y="35.00" font-size="8.4" fill="#666" text-anchor="end" font-family="Liberation Sans">50000</text><line x1="29" y1="19.5" x2="165" y2="19.5" stroke="#ebebeb" stroke-width="1"/><text x="27.0" y="21.80" font-size="8.4" fill="#666" text-anchor="end" font-family="Liberation Sans">60000</text><line x1="29" y1="6.5" x2="165" y2="6.5" stroke="#ebebeb" stroke-width="1"/><text x="27.0" y="8.60" font-size="8.4" fill="#666" text-anchor="end" font-family="Liberation Sans">70000</text><line x1="33.5" y1="6" x2="33.5" y2="104" stroke="#d8d8d8" stroke-width="1"/><line x1="43.5" y1="6" x2="43.5" y2="104" stroke="#ebebeb" stroke-width="1"/><line x1="54.5" y1="6" x2="54.5" y2="104" stroke="#ebebeb" stroke-width="1"/><line x1="65.5" y1="6" x2="65.5" y2="104" stroke="#ebebeb" stroke-width="1"/><line x1="76.5" y1="6" x2="76.5" y2="104" stroke="#ebebeb" stroke-width="1"/><line x1="87.5" y1="6" x2="87.5" y2="104" stroke="#ebebeb" stroke-width="1"/><line x1="98.5" y1="6" x2="98.5" y2="104" stroke="#ebebeb" stroke-width="1"/><line x1="109.5" y1="6" x2="109.5" y2="104" stroke="#ebebeb" stroke-width="1"/><line x1="120.5" y1="6" x2="120.5" y2="104" stroke="#ebebeb" stroke-width="1"/><line x1="131.5" y1="6" x2="131.5" y2="104" stroke="#ebebeb" stroke-width="1"/><line x1="142.5" y1="6" x2="142.5" y2="104" stroke="#ebebeb" stroke-width="1"/><line x1="153.5" y1="6" x2="153.5" y2="104" stroke="#ebebeb" stroke-width="1"/><line x1="164.5" y1="6" x2="164.5" y2="104" stroke="#ebebeb" stroke-width="1"/><rect x="38.68" y="94.44" width="3.93" height="3.96" fill="#4c9dbf"/><rect x="49.61" y="93.12" width="3.93" height="5.28" fill="#4c9dbf"/><rect x="60.53" y="98.00" width="3.93" height="0.40" fill="#4c9dbf"/><rect x="71.46" y="95.76" width="3.93" height="2.64" fill="#4c9dbf"/><rect x="82.38" y="94.70" width="3.93" height="3.70" fill="#4c9dbf"/><rect x="88.94" y="97.08" width="3.93" height="1.32" fill="#9266ab"/><rect x="93.31" y="17.88" width="3.93" height="80.52" fill="#4c9dbf"/><rect x="99.86" y="94.44" width="3.93" height="3.96" fill="#9266ab"/><rect x="143.56" y="95.10" width="3.93" height="3.30" fill="#9266ab"/><text x="39.06" y="107.70" font-size="8.4" fill="#666" text-anchor="end" font-family="Liberation Sans" transform="rotate(-45 39.06 104.70)">J</text><text x="49.99" y="107.70" font-size="8.4" fill="#666" text-anchor="end" font-family="Liberation Sans" transform="rotate(-45 49.99 104.70)">Fe</text><text x="60.91" y="107.70" font-size="8.4" fill="#666" text-anchor="end" font-family="Liberation Sans" transform="rotate(-45 60.91 104.70)">Ma</text><text x="71.84" y="107.70" font-size="8.4" fill="#666" text-anchor="end" font-family="Liberation Sans" transform="rotate(-45 71.84 104.70)">A</text><text x="82.76" y="107.70" font-size="8.4" fill="#666" text-anchor="end" font-family="Liberation Sans" transform="rotate(-45 82.76 104.70)">Ma</text><text x="93.69" y="107.70" font-size="8.4" fill="#666" text-anchor="end" font-family="Liberation Sans" transform="rotate(-45 93.69 104.70)">J</text><text x="104.61" y="107.70" font-size="8.4" fill="#666" text-anchor="end" font-family="Liberation Sans" transform="rotate(-45 104.61 104.70)">J</text><text x="115.54" y="107.70" font-size="8.4" fill="#666" text-anchor="end" font-family="Liberation Sans" transform="rotate(-45 115.54 104.70)">A</text><text x="126.46" y="107.70" font-size="8.4" fill="#666" text-anchor="end" font-family="Liberation Sans" transform="rotate(-45 126.46 104.70)">Zo</text><text x="137.39" y="107.70" font-size="8.4" fill="#666" text-anchor="end" font-family="Liberation Sans" transform="rotate(-45 137.39 104.70)">O</text><text x="148.31" y="107.70" font-size="8.4" fill="#666" text-anchor="end" font-family="Liberation Sans" transform="rotate(-45 148.31 104.70)">N</text><text x="159.24" y="107.70" font-size="8.4" fill="#666" text-anchor="end" font-family="Liberation Sans" transform="rotate(-45 159.24 104.70)">D</text></svg>
<div class="a" style="left:168px;top:658px;width:433px;height:1px;background:#e0e0e0"></div>
<div class="wh" style="left:168px;top:684px;width:433px;height:25px"><span class="t">Projecten in bewerking</span>
<svg class="a" style="left:401px;top:6px" width="10.5" height="10.5" viewBox="0 0 12 12"><path d="M6 0 L8.6 2.8 H3.4 Z M6 12 L8.6 9.2 H3.4 Z M0 6 L2.8 3.4 V8.6 Z M12 6 L9.2 3.4 V8.6 Z" fill="#8a8a8a"/><path d="M6 2.5 V9.5 M2.5 6 H9.5" stroke="#8a8a8a" stroke-width="1.3"/></svg>
<svg class="a" style="left:418px;top:7px" width="10" height="9" viewBox="0 0 10 9"><rect width="10" height="9" rx="1" fill="#8a8a8a"/><path d="M3 2.2 L7 6.8 M7 2.2 L3 6.8" stroke="#e9eaed" stroke-width="1.4"/></svg>
</div>
<div class="row" style="left:168px;top:709px;width:433px;height:24px;background:#fff">
<svg class="a" style="left:5px;top:7px" width="14" height="11" viewBox="0 0 18 14"><rect x="6.5" y="0" width="5" height="4" rx=".6" fill="#6c6aa0"/><rect x="0" y="10" width="5" height="4" rx=".6" fill="#6c6aa0"/><rect x="6.5" y="10" width="5" height="4" rx=".6" fill="#6c6aa0"/><rect x="13" y="10" width="5" height="4" rx=".6" fill="#6c6aa0"/><path d="M9 4 V10 M2.5 10 V7 H15.5 V10" stroke="#6c6aa0" stroke-width="1.4" fill="none"/></svg>
<span style="left:20px">PJ2006-0036</span>
<span style="left:138px;color:#222">5 disques</span>
<span style="left:311px;color:#222">1 Taken</span>
<span style="right:37px;color:#222">0%</span>
<div class="dot" style="left:418px;top:7px"></div>
</div>
<div class="row" style="left:168px;top:733px;width:433px;height:24px;background:#fafafa">
<svg class="a" style="left:5px;top:7px" width="14" height="11" viewBox="0 0 18 14"><rect x="6.5" y="0" width="5" height="4" rx=".6" fill="#6c6aa0"/><rect x="0" y="10" width="5" height="4" rx=".6" fill="#6c6aa0"/><rect x="6.5" y="10" width="5" height="4" rx=".6" fill="#6c6aa0"/><rect x="13" y="10" width="5" height="4" rx=".6" fill="#6c6aa0"/><path d="M9 4 V10 M2.5 10 V7 H15.5 V10" stroke="#6c6aa0" stroke-width="1.4" fill="none"/></svg>
<span style="left:20px">PJ2006-0030</span>
<span style="left:138px;color:#222">bat man</span>
<span style="left:311px;color:#222">1 Taken</span>
<span style="right:37px;color:#222">0%</span>
<div class="dot" style="left:418px;top:7px"></div>
</div>
<div class="row" style="left:168px;top:757px;width:433px;height:25px;background:#fff">
<svg class="a" style="left:5px;top:7px" width="14" height="11" viewBox="0 0 18 14"><rect x="6.5" y="0" width="5" height="4" rx=".6" fill="#6c6aa0"/><rect x="0" y="10" width="5" height="4" rx=".6" fill="#6c6aa0"/><rect x="6.5" y="10" width="5" height="4" rx=".6" fill="#6c6aa0"/><rect x="13" y="10" width="5" height="4" rx=".6" fill="#6c6aa0"/><path d="M9 4 V10 M2.5 10 V7 H15.5 V10" stroke="#6c6aa0" stroke-width="1.4" fill="none"/></svg>
<span style="left:20px">PJ2006-0029</span>
<span style="left:138px;color:#222">yiğitsan PSA</span>
<span style="left:311px;color:#222">1 Taken</span>
<span style="right:37px;color:#222">25%</span>
<div class="dot" style="left:418px;top:7px"></div>
</div>
<div class="row" style="left:168px;top:782px;width:433px;height:24px;background:#fafafa">
<svg class="a" style="left:5px;top:7px" width="14" height="11" viewBox="0 0 18 14"><rect x="6.5" y="0" width="5" height="4" rx=".6" fill="#6c6aa0"/><rect x="0" y="10" width="5" height="4" rx=".6" fill="#6c6aa0"/><rect x="6.5" y="10" width="5" height="4" rx=".6" fill="#6c6aa0"/><rect x="13" y="10" width="5" height="4" rx=".6" fill="#6c6aa0"/><path d="M9 4 V10 M2.5 10 V7 H15.5 V10" stroke="#6c6aa0" stroke-width="1.4" fill="none"/></svg>
<span style="left:20px">PJ2006-0028</span>
<span style="left:138px;color:#222">00014</span>
<span style="left:311px;color:#222">1 Taken</span>
<span style="right:37px;color:#222">0%</span>
<div class="dot" style="left:418px;top:7px"></div>
</div>
<div class="row" style="left:168px;top:806px;width:433px;height:24px;background:#fff">
<svg class="a" style="left:5px;top:7px" width="14" height="11" viewBox="0 0 18 14"><rect x="6.5" y="0" width="5" height="4" rx=".6" fill="#a07070"/><rect x="0" y="10" width="5" height="4" rx=".6" fill="#a07070"/><rect x="6.5" y="10" width="5" height="4" rx=".6" fill="#a07070"/><rect x="13" y="10" width="5" height="4" rx=".6" fill="#a07070"/><path d="M9 4 V10 M2.5 10 V7 H15.5 V10" stroke="#a07070" stroke-width="1.4" fill="none"/></svg>
<span style="left:20px">PJ2006-0027</span>
<span style="left:138px;color:#222">WF6-SP-50 ressorts</span>
<span style="left:311px;color:#222">1 Taken</span>
<span style="right:37px;color:#222">0%</span>
<div class="dot" style="left:418px;top:7px"></div>
</div>
<div class="row" style="left:168px;top:830px;width:433px;height:24px;background:#fafafa"><span style="left:6px;color:#222">...</span></div>
<div class="a" style="left:198px;top:859px;width:433px;text-align:center;font-size:10.5px;color:#222;line-height:12px">26 Projecten</div>
<div class="wh" style="left:629px;top:305px;width:433px"><span class="t">Database statistieken</span></div>
<div class="sb" style="left:642px;top:339px;"><div class="sbt">Gebruikers</div>
<div class="sbv"><span style="display:inline-block;vertical-align:-1.5px;margin-right:4px;line-height:0">
<svg width="11" height="12" viewBox="0 0 11 12"><circle cx="5.5" cy="3.1" r="3.1" fill="#8c6d46"/><path d="M0 12 V10.3 Q0 6.8 3.3 6.8 H7.7 Q11 6.8 11 10.3 V12 Z" fill="#8c6d46"/></svg>
</span>11</div></div>
<div class="sb" style="left:747px;top:339px;"><div class="sbt">Onkostennota's</div>
<div class="sbv"><span style="display:inline-block;vertical-align:-1.5px;margin-right:4px;line-height:0">
<svg width="12.6" height="11" viewBox="0 0 17 15" preserveAspectRatio="none"><path d="M1.5 0 H15 V2 H2 V3.5 H16 Q17 3.5 17 4.5 V14 Q17 15 16 15 H1.5 Q0 15 0 13.5 V1.5 Q0 0 1.5 0 Z" fill="#7b6b50"/><circle cx="14" cy="9" r="1" fill="#ebebeb"/></svg>
</span>3</div></div>
<div class="sb" style="left:853px;top:339px;"><div class="sbt">Vertrekken</div>
<div class="sbv"><span style="display:inline-block;vertical-align:-1.5px;margin-right:4px;line-height:0">
<svg width="15" height="13" viewBox="0 0 15 13"><path d="M4.5 6.2 Q4 1 9 0.5 Q13.5 0.5 15 5 Q12 3.5 9.5 5 Q7 4 4.5 6.2 Z" fill="#9b6a2b"/><path d="M7.2 2 Q8.5 3 9.5 5 M11.5 1.2 Q12 3 12.3 4" stroke="#e9d8b8" stroke-width=".7" fill="none"/><path d="M9.3 4.5 L6.5 11.8" stroke="#9b6a2b" stroke-width="1.5"/><rect x="0" y="11.3" width="12" height="1.7" rx=".8" fill="#9b6a2b"/></svg>
</span>2</div></div>
<div class="sb" style="left:958px;top:339px;"><div class="sbt">Klanten</div>
<div class="sbv"><span style="display:inline-block;vertical-align:-1.5px;margin-right:4px;line-height:0">
<svg width="10.5" height="13" viewBox="0 0 10.5 13"><path d="M0 0.8 Q0 0 0.8 0 H9.7 Q10.5 0 10.5 0.8 V13 H6.5 V10.5 H4 V13 H0 Z" fill="#3c7bb4"/><g fill="#fff"><rect x="3" y="2" width="1.5" height="1.5"/><rect x="6" y="2" width="1.5" height="1.5"/><rect x="3" y="4.8" width="1.5" height="1.5"/><rect x="6" y="4.8" width="1.5" height="1.5"/><rect x="3" y="7.6" width="1.5" height="1.5"/><rect x="6" y="7.6" width="1.5" height="1.5"/></g></svg>
</span>62</div></div>
<div class="sb" style="left:642px;top:388px;"><div class="sbt">Prospecten</div>
<div class="sbv"><span style="display:inline-block;vertical-align:-1.5px;margin-right:4px;line-height:0">
<svg width="10.5" height="13" viewBox="0 0 10.5 13"><path d="M0 0.8 Q0 0 0.8 0 H9.7 Q10.5 0 10.5 0.8 V13 H6.5 V10.5 H4 V13 H0 Z" fill="#3c7bb4"/><g fill="#fff"><rect x="3" y="2" width="1.5" height="1.5"/><rect x="6" y="2" width="1.5" height="1.5"/><rect x="3" y="4.8" width="1.5" height="1.5"/><rect x="6" y="4.8" width="1.5" height="1.5"/><rect x="3" y="7.6" width="1.5" height="1.5"/><rect x="6" y="7.6" width="1.5" height="1.5"/></g></svg>
</span>29</div></div>
<div class="sb" style="left:747px;top:388px;"><div class="sbt">Leveranciers</div>
<div class="sbv"><span style="display:inline-block;vertical-align:-1.5px;margin-right:4px;line-height:0">
<svg width="10.5" height="13" viewBox="0 0 10.5 13"><path d="M0 0.8 Q0 0 0.8 0 H9.7 Q10.5 0 10.5 0.8 V13 H6.5 V10.5 H4 V13 H0 Z" fill="#3c7bb4"/><g fill="#fff"><rect x="3" y="2" width="1.5" height="1.5"/><rect x="6" y="2" width="1.5" height="1.5"/><rect x="3" y="4.8" width="1.5" height="1.5"/><rect x="6" y="4.8" width="1.5" height="1.5"/><rect x="3" y="7.6" width="1.5" height="1.5"/><rect x="6" y="7.6" width="1.5" height="1.5"/></g></svg>
</span>43</div></div>
<div class="sb" style="left:853px;top:388px;"><div class="sbt">Contactpersonen</div>
<div class="sbv"><span style="display:inline-block;vertical-align:-1.5px;margin-right:4px;line-height:0">
<svg width="11" height="12" viewBox="0 0 9 10"><rect x="0" y="0" width="8" height="10" rx="1" fill="#3c7bb4"/><rect x="8" y="1.5" width="1" height="1.5" fill="#3c7bb4"/><rect x="8" y="4.2" width="1" height="1.5" fill="#3c7bb4"/><rect x="8" y="7" width="1" height="1.5" fill="#3c7bb4"/><circle cx="4" cy="3.6" r="1.4" fill="#fff"/><path d="M1.7 7.8 Q1.7 5.7 4 5.7 Q6.3 5.7 6.3 7.8 Z" fill="#fff"/></svg>
</span>16</div></div>
<div class="sb" style="left:958px;top:388px;"><div class="sbt">Producten</div>
<div class="sbv"><span style="display:inline-block;vertical-align:-1.5px;margin-right:4px;line-height:0">
<svg width="13" height="13" viewBox="0 0 16 16"><path d="M8 0.5 L15.5 3.5 V12 L8 15.5 L0.5 12 V3.5 Z" fill="#a89a48"/><path d="M1.5 4 L8 6.8 L14.5 4 M8 6.8 V15" stroke="#fff" stroke-width="1.4" fill="none"/></svg>
</span>100</div></div>
<div class="sb" style="left:642px;top:436px;"><div class="sbt">Projecten</div>
<div class="sbv"><span style="display:inline-block;vertical-align:-1.5px;margin-right:4px;line-height:0">
<svg width="14" height="11.5" viewBox="0 0 18 14" preserveAspectRatio="none"><rect x="6.5" y="0" width="5" height="4" rx=".6" fill="#6c6aa0"/><rect x="0" y="10" width="5" height="4" rx=".6" fill="#6c6aa0"/><rect x="6.5" y="10" width="5" height="4" rx=".6" fill="#6c6aa0"/><rect x="13" y="10" width="5" height="4" rx=".6" fill="#6c6aa0"/><path d="M9 4 V10 M2.5 10 V7 H15.5 V10" stroke="#6c6aa0" stroke-width="1.4" fill="none"/></svg>
</span>43</div></div>
<div class="sb" style="left:747px;top:436px;"><div class="sbt">Offertes</div>
<div class="sbv"><span style="display:inline-block;vertical-align:-1.5px;margin-right:4px;line-height:0">
<svg width="14" height="12.5" viewBox="0 0 16 16" preserveAspectRatio="none"><path d="M1 0 H7.5 L10.5 3 V6.5 L6 11 L5.5 13.5 L8 13 L10.5 10.5 V15 Q10.5 16 9.5 16 H1 Q0 16 0 15 V1 Q0 0 1 0 Z" fill="#a3a68c"/><path d="M7 0 V3.5 H10.5" stroke="#ebebeb" stroke-width=".8" fill="none"/><path d="M2 13 Q3.5 11 4 12.5 Q4.5 13.5 6 12.8" stroke="#ebebeb" stroke-width=".9" fill="none"/><path d="M6.5 12.5 L13.5 5.5 L15 7 L8 14 L6 14.5 Z" fill="#a3a68c"/><path d="M12.8 6.2 L14.3 7.7" stroke="#ebebeb" stroke-width=".8"/></svg>
</span>102</div></div>
<div class="sb" style="left:853px;top:436px;"><div class="sbt">Verkooporders</div>
<div class="sbv"><span style="display:inline-block;vertical-align:-1.5px;margin-right:4px;line-height:0">
<svg width="10" height="13" viewBox="0 0 11.5 16" preserveAspectRatio="none"><path d="M1 0 H8 L11.5 3.5 V15 Q11.5 16 10.5 16 H1 Q0 16 0 15 V1 Q0 0 1 0 Z" fill="#a3a68c"/><path d="M7.7 0 V3.8 H11.5" stroke="#ebebeb" stroke-width=".8" fill="none"/><rect x="2" y="2" width="3" height="1" fill="#ebebeb"/><rect x="2" y="4" width="3" height="1" fill="#ebebeb"/><rect x="2.3" y="7.3" width="7" height="3.5" fill="none" stroke="#ebebeb" stroke-width="1"/><rect x="7" y="13" width="3" height="1" fill="#ebebeb"/></svg>
</span>153</div></div>
<div class="sb" style="left:958px;top:436px;"><div class="sbt">Klantenfactuur</div>
<div class="sbv"><span style="display:inline-block;vertical-align:-1.5px;margin-right:4px;line-height:0">
<svg width="10" height="13" viewBox="0 0 11.5 16" preserveAspectRatio="none"><path d="M1 0 H8 L11.5 3.5 V15 Q11.5 16 10.5 16 H1 Q0 16 0 15 V1 Q0 0 1 0 Z" fill="#a3a68c"/><path d="M7.7 0 V3.8 H11.5" stroke="#ebebeb" stroke-width=".8" fill="none"/><rect x="2" y="2" width="3" height="1" fill="#ebebeb"/><rect x="2" y="4" width="3" height="1" fill="#ebebeb"/><path d="M7.6 8.2 Q7.2 7.2 5.8 7.2 Q4 7.2 4 8.5 Q4 9.6 5.8 9.9 Q7.6 10.2 7.6 11.5 Q7.6 12.8 5.8 12.8 Q4.3 12.8 3.9 11.8 M5.8 6.2 V13.8" stroke="#ebebeb" stroke-width="1.1" fill="none"/></svg>
</span>180</div></div>
<div class="sb" style="left:642px;top:485px;width:92px;"><div class="sbt">Leveranciersvo...</div>
<div class="sbv"><span style="display:inline-block;vertical-align:-1.5px;margin-right:4px;line-height:0">
<svg width="14" height="12.5" viewBox="0 0 16 16" preserveAspectRatio="none"><path d="M1 0 H7.5 L10.5 3 V6.5 L6 11 L5.5 13.5 L8 13 L10.5 10.5 V15 Q10.5 16 9.5 16 H1 Q0 16 0 15 V1 Q0 0 1 0 Z" fill="#6d9fb0"/><path d="M7 0 V3.5 H10.5" stroke="#ebebeb" stroke-width=".8" fill="none"/><path d="M2 13 Q3.5 11 4 12.5 Q4.5 13.5 6 12.8" stroke="#ebebeb" stroke-width=".9" fill="none"/><path d="M6.5 12.5 L13.5 5.5 L15 7 L8 14 L6 14.5 Z" fill="#6d9fb0"/><path d="M12.8 6.2 L14.3 7.7" stroke="#ebebeb" stroke-width=".8"/></svg>
</span>26</div></div>
<div class="sb" style="left:748px;top:485px;width:92px;"><div class="sbt">Inkooporders</div>
<div class="sbv"><span style="display:inline-block;vertical-align:-1.5px;margin-right:4px;line-height:0">
<svg width="10" height="13" viewBox="0 0 11.5 16" preserveAspectRatio="none"><path d="M1 0 H8 L11.5 3.5 V15 Q11.5 16 10.5 16 H1 Q0 16 0 15 V1 Q0 0 1 0 Z" fill="#6d9fb0"/><path d="M7.7 0 V3.8 H11.5" stroke="#ebebeb" stroke-width=".8" fill="none"/><rect x="2" y="2" width="3" height="1" fill="#ebebeb"/><rect x="2" y="4" width="3" height="1" fill="#ebebeb"/><rect x="2.3" y="7.3" width="7" height="3.5" fill="none" stroke="#ebebeb" stroke-width="1"/><rect x="7" y="13" width="3" height="1" fill="#ebebeb"/></svg>
</span>69</div></div>
<div class="sb" style="left:854px;top:485px;width:92px;"><div class="sbt">Facturen lever...</div>
<div class="sbv"><span style="display:inline-block;vertical-align:-1.5px;margin-right:4px;line-height:0">
<svg width="10" height="13" viewBox="0 0 11.5 16" preserveAspectRatio="none"><path d="M1 0 H8 L11.5 3.5 V15 Q11.5 16 10.5 16 H1 Q0 16 0 15 V1 Q0 0 1 0 Z" fill="#6d9fb0"/><path d="M7.7 0 V3.8 H11.5" stroke="#ebebeb" stroke-width=".8" fill="none"/><rect x="2" y="2" width="3" height="1" fill="#ebebeb"/><rect x="2" y="4" width="3" height="1" fill="#ebebeb"/><path d="M7.6 8.2 Q7.2 7.2 5.8 7.2 Q4 7.2 4 8.5 Q4 9.6 5.8 9.9 Q7.6 10.2 7.6 11.5 Q7.6 12.8 5.8 12.8 Q4.3 12.8 3.9 11.8 M5.8 6.2 V13.8" stroke="#ebebeb" stroke-width="1.1" fill="none"/></svg>
</span>44</div></div>
<div class="wh" style="left:629px;top:559px;width:433px;height:26px"><span class="t">Klantorders per maand</span>
<svg class="a" style="left:401px;top:6px" width="10.5" height="10.5" viewBox="0 0 12 12"><path d="M6 0 L8.6 2.8 H3.4 Z M6 12 L8.6 9.2 H3.4 Z M0 6 L2.8 3.4 V8.6 Z M12 6 L9.2 3.4 V8.6 Z" fill="#8a8a8a"/><path d="M6 2.5 V9.5 M2.5 6 H9.5" stroke="#8a8a8a" stroke-width="1.3"/></svg>
<svg class="a" style="left:418px;top:7px" width="10" height="9" viewBox="0 0 10 9"><rect width="10" height="9" rx="1" fill="#8a8a8a"/><path d="M3 2.2 L7 6.8 M7 2.2 L3 6.8" stroke="#e9eaed" stroke-width="1.4"/></svg>
<svg class="a" style="left:384px;top:6px" width="10.5" height="10.5" viewBox="0 0 11 11"><path d="M0 0 H11 L6.8 5.2 V10.5 L4.2 9 V5.2 Z" fill="#8a8a8a"/></svg>
</div>
<div class="a" style="left:586px;top:590.5px;width:300px;text-align:center;font-size:10.7px;color:#222;line-height:12px">Aantal opdrachten per maand</div>
<div class="a" style="left:679px;top:610px;width:27px;height:8.5px;background:#9266ab"></div>
<div class="a" style="left:709px;top:608px;font-size:8.4px;color:#666;line-height:11px">2019</div>
<div class="a" style="left:733px;top:610px;width:27px;height:8.5px;background:#4c9dbf"></div>
<div class="a" style="left:763px;top:608px;font-size:8.4px;color:#666;line-height:11px">2020</div>
<svg class="a" style="left:648.5px;top:619px" width="166" height="121"><line x1="14" y1="99.5" x2="162" y2="99.5" stroke="#bdbdbd" stroke-width="1"/><text x="12.0" y="101.90" font-size="8.4" fill="#666" text-anchor="end" font-family="Liberation Sans">0</text><line x1="14" y1="89.5" x2="162" y2="89.5" stroke="#ebebeb" stroke-width="1"/><text x="12.0" y="92.57" font-size="8.4" fill="#666" text-anchor="end" font-family="Liberation Sans">5</text><line x1="14" y1="80.5" x2="162" y2="80.5" stroke="#ebebeb" stroke-width="1"/><text x="12.0" y="83.24" font-size="8.4" fill="#666" text-anchor="end" font-family="Liberation Sans">10</text><line x1="14" y1="71.5" x2="162" y2="71.5" stroke="#ebebeb" stroke-width="1"/><text x="12.0" y="73.91" font-size="8.4" fill="#666" text-anchor="end" font-family="Liberation Sans">15</text><line x1="14" y1="61.5" x2="162" y2="61.5" stroke="#ebebeb" stroke-width="1"/><text x="12.0" y="64.58" font-size="8.4" fill="#666" text-anchor="end" font-family="Liberation Sans">20</text><line x1="14" y1="52.5" x2="162" y2="52.5" stroke="#ebebeb" stroke-width="1"/><text x="12.0" y="55.25" font-size="8.4" fill="#666" text-anchor="end" font-family="Liberation Sans">25</text><line x1="14" y1="43.5" x2="162" y2="43.5" stroke="#ebebeb" stroke-width="1"/><text x="12.0" y="45.92" font-size="8.4" fill="#666" text-anchor="end" font-family="Liberation Sans">30</text><line x1="14" y1="33.5" x2="162" y2="33.5" stroke="#ebebeb" stroke-width="1"/><text x="12.0" y="36.59" font-size="8.4" fill="#666" text-anchor="end" font-family="Liberation Sans">35</text><line x1="14" y1="24.5" x2="162" y2="24.5" stroke="#ebebeb" stroke-width="1"/><text x="12.0" y="27.26" font-size="8.4" fill="#666" text-anchor="end" font-family="Liberation Sans">40</text><line x1="14" y1="15.5" x2="162" y2="15.5" stroke="#ebebeb" stroke-width="1"/><text x="12.0" y="17.93" font-size="8.4" fill="#666" text-anchor="end" font-family="Liberation Sans">45</text><line x1="14" y1="6.5" x2="162" y2="6.5" stroke="#ebebeb" stroke-width="1"/><text x="12.0" y="8.60" font-size="8.4" fill="#666" text-anchor="end" font-family="Liberation Sans">50</text><line x1="18.5" y1="6" x2="18.5" y2="105" stroke="#d8d8d8" stroke-width="1"/><line x1="29.5" y1="6" x2="29.5" y2="105" stroke="#ebebeb" stroke-width="1"/><line x1="41.5" y1="6" x2="41.5" y2="105" stroke="#ebebeb" stroke-width="1"/><line x1="53.5" y1="6" x2="53.5" y2="105" stroke="#ebebeb" stroke-width="1"/><line x1="65.5" y1="6" x2="65.5" y2="105" stroke="#ebebeb" stroke-width="1"/><line x1="77.5" y1="6" x2="77.5" y2="105" stroke="#ebebeb" stroke-width="1"/><line x1="89.5" y1="6" x2="89.5" y2="105" stroke="#ebebeb" stroke-width="1"/><line x1="101.5" y1="6" x2="101.5" y2="105" stroke="#ebebeb" stroke-width="1"/><line x1="113.5" y1="6" x2="113.5" y2="105" stroke="#ebebeb" stroke-width="1"/><line x1="125.5" y1="6" x2="125.5" y2="105" stroke="#ebebeb" stroke-width="1"/><line x1="137.5" y1="6" x2="137.5" y2="105" stroke="#ebebeb" stroke-width="1"/><line x1="149.5" y1="6" x2="149.5" y2="105" stroke="#ebebeb" stroke-width="1"/><line x1="161.5" y1="6" x2="161.5" y2="105" stroke="#ebebeb" stroke-width="1"/><rect x="24.22" y="95.57" width="4.31" height="3.73" fill="#4c9dbf"/><rect x="36.18" y="84.37" width="4.31" height="14.93" fill="#4c9dbf"/><rect x="60.09" y="97.43" width="4.31" height="1.87" fill="#4c9dbf"/><rect x="72.05" y="97.43" width="4.31" height="1.87" fill="#4c9dbf"/><rect x="84.01" y="11.60" width="4.31" height="87.70" fill="#4c9dbf"/><rect x="91.18" y="89.97" width="4.31" height="9.33" fill="#9266ab"/><rect x="103.14" y="97.43" width="4.31" height="1.87" fill="#9266ab"/><rect x="127.06" y="97.43" width="4.31" height="1.87" fill="#9266ab"/><rect x="139.02" y="95.57" width="4.31" height="3.73" fill="#9266ab"/><rect x="150.98" y="97.43" width="4.31" height="1.87" fill="#9266ab"/><text x="24.58" y="108.60" font-size="8.4" fill="#666" text-anchor="end" font-family="Liberation Sans" transform="rotate(-45 24.58 105.60)">J</text><text x="36.54" y="108.60" font-size="8.4" fill="#666" text-anchor="end" font-family="Liberation Sans" transform="rotate(-45 36.54 105.60)">Fe</text><text x="48.50" y="108.60" font-size="8.4" fill="#666" text-anchor="end" font-family="Liberation Sans" transform="rotate(-45 48.50 105.60)">Ma</text><text x="60.45" y="108.60" font-size="8.4" fill="#666" text-anchor="end" font-family="Liberation Sans" transform="rotate(-45 60.45 105.60)">A</text><text x="72.41" y="108.60" font-size="8.4" fill="#666" text-anchor="end" font-family="Liberation Sans" transform="rotate(-45 72.41 105.60)">Ma</text><text x="84.37" y="108.60" font-size="8.4" fill="#666" text-anchor="end" font-family="Liberation Sans" transform="rotate(-45 84.37 105.60)">J</text><text x="96.33" y="108.60" font-size="8.4" fill="#666" text-anchor="end" font-family="Liberation Sans" transform="rotate(-45 96.33 105.60)">J</text><text x="108.29" y="108.60" font-size="8.4" fill="#666" text-anchor="end" font-family="Liberation Sans" transform="rotate(-45 108.29 105.60)">A</text><text x="120.25" y="108.60" font-size="8.4" fill="#666" text-anchor="end" font-family="Liberation Sans" transform="rotate(-45 120.25 105.60)">Zo</text><text x="132.20" y="108.60" font-size="8.4" fill="#666" text-anchor="end" font-family="Liberation Sans" transform="rotate(-45 132.20 105.60)">O</text><text x="144.16" y="108.60" font-size="8.4" fill="#666" text-anchor="end" font-family="Liberation Sans" transform="rotate(-45 144.16 105.60)">N</text><text x="156.12" y="108.60" font-size="8.4" fill="#666" text-anchor="end" font-family="Liberation Sans" transform="rotate(-45 156.12 105.60)">D</text></svg>
<div class="a" style="left:805px;top:590.5px;width:300px;text-align:center;font-size:10.7px;color:#222;line-height:12px">Aantal bestellingen per maand (excl. BTW)</div>
<div class="a" style="left:897px;top:610px;width:27px;height:8.5px;background:#9266ab"></div>
<div class="a" style="left:927px;top:608px;font-size:8.4px;color:#666;line-height:11px">2019</div>
<div class="a" style="left:951px;top:610px;width:27px;height:8.5px;background:#4c9dbf"></div>
<div class="a" style="left:981px;top:608px;font-size:8.4px;color:#666;line-height:11px">2020</div>
<svg class="a" style="left:864.8px;top:619px" width="168" height="121"><line x1="34" y1="99.5" x2="164" y2="99.5" stroke="#bdbdbd" stroke-width="1"/><text x="32.0" y="101.90" font-size="8.4" fill="#666" text-anchor="end" font-family="Liberation Sans">0</text><line x1="34" y1="87.5" x2="164" y2="87.5" stroke="#ebebeb" stroke-width="1"/><text x="32.0" y="90.24" font-size="8.4" fill="#666" text-anchor="end" font-family="Liberation Sans">100000</text><line x1="34" y1="75.5" x2="164" y2="75.5" stroke="#ebebeb" stroke-width="1"/><text x="32.0" y="78.57" font-size="8.4" fill="#666" text-anchor="end" font-family="Liberation Sans">200000</text><line x1="34" y1="64.5" x2="164" y2="64.5" stroke="#ebebeb" stroke-width="1"/><text x="32.0" y="66.91" font-size="8.4" fill="#666" text-anchor="end" font-family="Liberation Sans">300000</text><line x1="34" y1="52.5" x2="164" y2="52.5" stroke="#ebebeb" stroke-width="1"/><text x="32.0" y="55.25" font-size="8.4" fill="#666" text-anchor="end" font-family="Liberation Sans">400000</text><line x1="34" y1="40.5" x2="164" y2="40.5" stroke="#ebebeb" stroke-width="1"/><text x="32.0" y="43.59" font-size="8.4" fill="#666" text-anchor="end" font-family="Liberation Sans">500000</text><line x1="34" y1="29.5" x2="164" y2="29.5" stroke="#ebebeb" stroke-width="1"/><text x="32.0" y="31.93" font-size="8.4" fill="#666" text-anchor="end" font-family="Liberation Sans">600000</text><line x1="34" y1="17.5" x2="164" y2="17.5" stroke="#ebebeb" stroke-width="1"/><text x="32.0" y="20.26" font-size="8.4" fill="#666" text-anchor="end" font-family="Liberation Sans">700000</text><line x1="34" y1="6.5" x2="164" y2="6.5" stroke="#ebebeb" stroke-width="1"/><text x="32.0" y="8.60" font-size="8.4" fill="#666" text-anchor="end" font-family="Liberation Sans">800000</text><line x1="38.5" y1="6" x2="38.5" y2="105" stroke="#d8d8d8" stroke-width="1"/><line x1="48.5" y1="6" x2="48.5" y2="105" stroke="#ebebeb" stroke-width="1"/><line x1="58.5" y1="6" x2="58.5" y2="105" stroke="#ebebeb" stroke-width="1"/><line x1="69.5" y1="6" x2="69.5" y2="105" stroke="#ebebeb" stroke-width="1"/><line x1="79.5" y1="6" x2="79.5" y2="105" stroke="#ebebeb" stroke-width="1"/><line x1="90.5" y1="6" x2="90.5" y2="105" stroke="#ebebeb" stroke-width="1"/><line x1="100.5" y1="6" x2="100.5" y2="105" stroke="#ebebeb" stroke-width="1"/><line x1="111.5" y1="6" x2="111.5" y2="105" stroke="#ebebeb" stroke-width="1"/><line x1="121.5" y1="6" x2="121.5" y2="105" stroke="#ebebeb" stroke-width="1"/><line x1="132.5" y1="6" x2="132.5" y2="105" stroke="#ebebeb" stroke-width="1"/><line x1="142.5" y1="6" x2="142.5" y2="105" stroke="#ebebeb" stroke-width="1"/><line x1="153.5" y1="6" x2="153.5" y2="105" stroke="#ebebeb" stroke-width="1"/><line x1="163.5" y1="6" x2="163.5" y2="105" stroke="#ebebeb" stroke-width="1"/><rect x="53.90" y="98.37" width="3.77" height="0.93" fill="#4c9dbf"/><rect x="95.73" y="15.33" width="3.77" height="83.97" fill="#4c9dbf"/><rect x="102.00" y="98.95" width="3.77" height="0.35" fill="#9266ab"/><text x="43.83" y="108.60" font-size="8.4" fill="#666" text-anchor="end" font-family="Liberation Sans" transform="rotate(-45 43.83 105.60)">J</text><text x="54.29" y="108.60" font-size="8.4" fill="#666" text-anchor="end" font-family="Liberation Sans" transform="rotate(-45 54.29 105.60)">Fe</text><text x="64.75" y="108.60" font-size="8.4" fill="#666" text-anchor="end" font-family="Liberation Sans" transform="rotate(-45 64.75 105.60)">Ma</text><text x="75.20" y="108.60" font-size="8.4" fill="#666" text-anchor="end" font-family="Liberation Sans" transform="rotate(-45 75.20 105.60)">A</text><text x="85.66" y="108.60" font-size="8.4" fill="#666" text-anchor="end" font-family="Liberation Sans" transform="rotate(-45 85.66 105.60)">Ma</text><text x="96.12" y="108.60" font-size="8.4" fill="#666" text-anchor="end" font-family="Liberation Sans" transform="rotate(-45 96.12 105.60)">J</text><text x="106.58" y="108.60" font-size="8.4" fill="#666" text-anchor="end" font-family="Liberation Sans" transform="rotate(-45 106.58 105.60)">J</text><text x="117.04" y="108.60" font-size="8.4" fill="#666" text-anchor="end" font-family="Liberation Sans" transform="rotate(-45 117.04 105.60)">A</text><text x="127.50" y="108.60" font-size="8.4" fill="#666" text-anchor="end" font-family="Liberation Sans" transform="rotate(-45 127.50 105.60)">Zo</text><text x="137.95" y="108.60" font-size="8.4" fill="#666" text-anchor="end" font-family="Liberation Sans" transform="rotate(-45 137.95 105.60)">O</text><text x="148.41" y="108.60" font-size="8.4" fill="#666" text-anchor="end" font-family="Liberation Sans" transform="rotate(-45 148.41 105.60)">N</text><text x="158.87" y="108.60" font-size="8.4" fill="#666" text-anchor="end" font-family="Liberation Sans" transform="rotate(-45 158.87 105.60)">D</text></svg>
<div class="a" style="left:629px;top:742px;width:433px;height:1px;background:#e0e0e0"></div>
</body></html>
